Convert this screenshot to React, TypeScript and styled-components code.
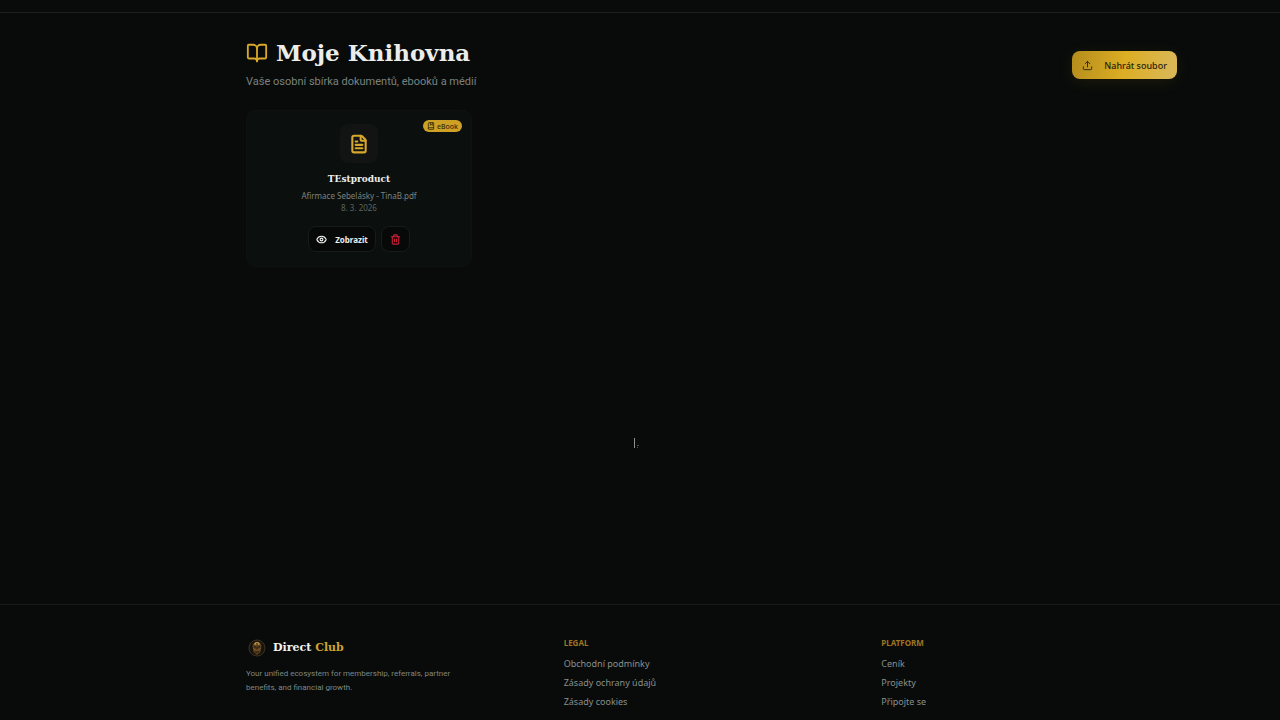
import React from "react";
import styled, { createGlobalStyle } from "styled-components";
import { BookOpen, Upload, FileText, Eye, Trash2, BookMarked } from "lucide-react";

const sans = `"Noto Sans", "Open Sans", sans-serif`;
const sansNarrow = `Roboto, "Noto Sans", sans-serif`;
const serif = `"DejaVu Serif", Georgia, serif`;
const serifNarrow = `"DejaVu Serif Condensed", "DejaVu Serif", Georgia, serif`;

const GlobalStyle = createGlobalStyle`
  * { box-sizing: border-box; }
  body { margin: 0; background: #080b0a; color: #f2f2f0; font-family: ${sans}; }
  h1, h2, h3, p, ul { margin: 0; padding: 0; }
  button { font-family: inherit; cursor: pointer; }
`;

const Page = styled.div`
  position: relative;
  min-height: 100vh;
  display: flex;
  flex-direction: column;
`;
const TopBar = styled.header`
  height: 13px;
  border-bottom: 1px solid #1b201e;
`;
const Shell = styled.div`
  padding-left: 143px;
`;
const Container = styled.div`
  width: 100%;
  max-width: 931px;
  margin: 0 auto;
`;
const Main = styled.main`
  flex: 1;
  padding: 24px 0;
`;
const Heading = styled.div`
  display: flex;
  align-items: flex-end;
  justify-content: space-between;
  margin-bottom: 20px;
`;
const TitleRow = styled.div`
  display: flex;
  align-items: center;
  gap: 8px;
  color: #d8a82c;
`;
const Title = styled.h1`
  font: 700 23px/32px ${serif};
  color: #ecedeb;
`;
const Subtitle = styled.p`
  font-family: ${sansNarrow};
  font-size: 11px;
  line-height: 16px;
  margin-top: 5px;
  color: #7b827e;
`;
const UploadButton = styled.button`
  display: flex;
  align-items: center;
  justify-content: center;
  gap: 11px;
  height: 28px;
  margin-bottom: 11px;
  padding: 0 10px;
  border: 0;
  border-radius: 8px;
  font-size: 9px;
  font-weight: 500;
  color: #2b210a;
  background: linear-gradient(100deg, #b48c1c, #dcae24 50%, #d9b85c);
  box-shadow: 0 3px 16px rgba(212, 168, 40, 0.1);
`;
const Grid = styled.div`
  display: grid;
  grid-template-columns: repeat(4, 1fr);
  gap: 9px;
`;
const Card = styled.article`
  position: relative;
  display: flex;
  flex-direction: column;
  align-items: center;
  padding: 13px 14px 14px;
  border: 1px solid #0e1311;
  border-radius: 10px;
  background: #0b100e;
`;
const Badge = styled.span`
  position: absolute;
  top: 9px;
  right: 9px;
  display: flex;
  align-items: center;
  gap: 2px;
  height: 12px;
  padding: 0 4px;
  border-radius: 6px;
  font-size: 7px;
  font-weight: 500;
  color: #382b08;
  background: #cda125;
`;
const FileTile = styled.div`
  display: flex;
  align-items: center;
  justify-content: center;
  width: 38px;
  height: 39px;
  border-radius: 8px;
  color: #d8a82c;
  background: #111412;
`;
const CardTitle = styled.h2`
  font: 700 10px/16px ${serifNarrow};
  margin: 8px 0 3px;
  color: #eeeeec;
`;
const Meta = styled.p<{ $dim?: boolean }>`
  font-size: 8px;
  line-height: 12px;
  color: ${(p) => (p.$dim ? "#5d6460" : "#7b827e")};
`;
const Actions = styled.div`
  display: flex;
  gap: 5px;
  margin-top: 12px;
`;
const ActionButton = styled.button<{ $danger?: boolean }>`
  display: flex;
  align-items: center;
  justify-content: center;
  gap: 8px;
  min-width: 29px;
  height: 26px;
  padding: 0 7px;
  border: 1px solid #171b19;
  border-radius: 8px;
  font-size: 8px;
  font-weight: 700;
  color: ${(p) => (p.$danger ? "#c81f3a" : "#eeeeec")};
  background: #070908;
`;
const Footer = styled.footer`
  border-top: 1px solid #171c1a;
  padding: 32px 0 11px;
`;
const FooterGrid = styled.div`
  display: grid;
  grid-template-columns: repeat(3, 1fr);
  gap: 22px;
`;
const Brand = styled.div`
  display: flex;
  align-items: center;
  gap: 7px;
  height: 22px;
  padding-left: 2px;
  font: 700 11px/20px ${serif};
  color: #f2f2f0;
`;
const Gold = styled.span`
  color: #d0a133;
`;
const Blurb = styled.p`
  max-width: 220px;
  margin-top: 8px;
  font-family: ${sansNarrow};
  font-size: 8px;
  line-height: 14px;
  color: #7f8783;
`;
const ColumnTitle = styled.h3`
  font-size: 8px;
  line-height: 12px;
  font-weight: 700;
  color: #9c7522;
`;
const Links = styled.ul`
  display: flex;
  flex-direction: column;
  gap: 5px;
  margin-top: 8px;
  list-style: none;
`;
const LinkItem = styled.li`
  display: flex;
  font-size: 9px;
  line-height: 14px;
`;
const FooterLink = styled.a`
  color: #89908c;
  text-decoration: none;
`;
const Caret = styled.svg`
  position: absolute;
  left: 633px;
  top: 437px;
`;

function Emblem() {
  return (
    <svg width="18" height="18" viewBox="0 0 18 18" aria-hidden="true">
      <circle cx="9" cy="9" r="8" fill="#17130c" stroke="#3d3325" strokeWidth="1" />
      <path d="M4.500 7c0-5 9-5 9 0l-1 6-3.500 3-3.500-3z" fill="#5c4020" />
      <path d="M6 5c1-3 5-3 6 0l-1 1H7z" fill="#b18a43" />
      <path d="M9 4v2M6 8h2M10 8h2M9 8v3M7 13h4" stroke="#25180a" strokeWidth="1" />
      <path d="M5 9l2 2h4l2-2" fill="none" stroke="#7c5829" strokeWidth="1" />
    </svg>
  );
}

const columns = [
  { title: "LEGAL", links: ["Obchodní podmínky", "Zásady ochrany údajů", "Zásady cookies"] },
  { title: "PLATFORM", links: ["Ceník", "Projekty", "Připojte se"] },
];

export default function App() {
  return (
    <Page>
      <GlobalStyle />
      <TopBar />
      <Main>
        <Shell>
          <Container>
            <Heading>
              <div>
                <TitleRow>
                  <BookOpen size={22} strokeWidth={2} />
                  <Title>Moje Knihovna</Title>
                </TitleRow>
                <Subtitle>Vaše osobní sbírka dokumentů, ebooků a médií</Subtitle>
              </div>
              <UploadButton type="button">
                <Upload size={11} />
                Nahrát soubor
              </UploadButton>
            </Heading>
            <Grid>
              <Card>
                <Badge>
                  <BookMarked size={8} strokeWidth={2.5} />
                  eBook
                </Badge>
                <FileTile>
                  <FileText size={20} strokeWidth={2.5} />
                </FileTile>
                <CardTitle>TEstproduct</CardTitle>
                <Meta>Afirmace Sebelásky - TinaB.pdf</Meta>
                <Meta $dim>8. 3. 2026</Meta>
                <Actions>
                  <ActionButton type="button">
                    <Eye size={11} strokeWidth={2.5} />
                    Zobrazit
                  </ActionButton>
                  <ActionButton type="button" $danger aria-label="Smazat">
                    <Trash2 size={11} strokeWidth={2.5} />
                  </ActionButton>
                </Actions>
              </Card>
            </Grid>
          </Container>
        </Shell>
      </Main>
      <Footer>
        <Shell>
          <Container>
            <FooterGrid>
              <div>
                <Brand>
                  <Emblem />
                  <span>
                    Direct <Gold>Club</Gold>
                  </span>
                </Brand>
                <Blurb>
                  Your unified ecosystem for membership, referrals, partner benefits, and financial growth.
                </Blurb>
              </div>
              {columns.map((c) => (
                <nav key={c.title} aria-label={c.title}>
                  <ColumnTitle>{c.title}</ColumnTitle>
                  <Links>
                    {c.links.map((l) => (
                      <LinkItem key={l}>
                        <FooterLink href="#">{l}</FooterLink>
                      </LinkItem>
                    ))}
                  </Links>
                </nav>
              ))}
            </FooterGrid>
          </Container>
        </Shell>
      </Footer>
      <Caret width="8" height="12" viewBox="0 0 8 12" aria-hidden="true">
        <path d="M1.5 1v10" stroke="#8c908e" strokeWidth="1" />
        <path d="M4 8.500h2M4 10.500h1" stroke="#4c504e" strokeWidth="1" />
      </Caret>
    </Page>
  );
}
